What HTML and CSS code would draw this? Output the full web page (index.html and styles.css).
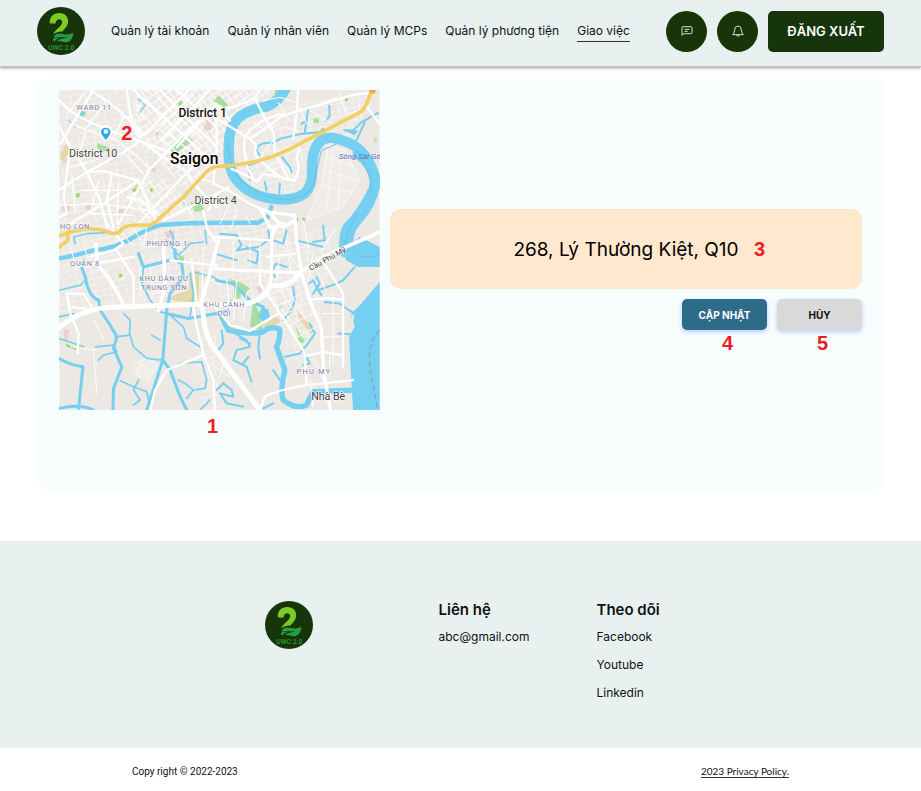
FILE: index.html
```html
<!DOCTYPE html>
<html lang="vi">
<head>
<meta charset="utf-8">
<meta name="viewport" content="width=device-width, initial-scale=1">
<title>UWC 2.0</title>
<link rel="stylesheet" href="styles.css">
</head>
<body>
<svg class="defs" aria-hidden="true">
  <symbol id="logo" viewBox="24 15 142 142">
    <circle cx="95" cy="86" r="71" fill="#17350b"/>
    <path d="M62 64C60 44 73 33 90 33C107 33 117 44 116 59C115 73 105 80 99 88C89 87 82 90 72 96C75 83 95 74 98 62C101 49 80 46 79 64Z" fill="#7ccb25"/>
    <path d="M73 106C76 93 88 91 101 95C111 98 120 96 132 92C130 104 126 117 112 119C101 121 92 113 81 117C91 107 102 110 116 103C101 108 88 100 73 106Z" fill="#2a9a43"/>
    <path d="M71 110C77 105 85 104 93 107C85 108 79 111 75 118C73 116 71 113 71 110Z" fill="#2a9a43"/>
    <text x="96" y="141" text-anchor="middle" class="logo-text">UWC 2.0</text>
  </symbol>
</svg>
<header class="header">
  <a class="logo" href="#" aria-label="UWC 2.0"><svg><use href="#logo"/></svg></a>
  <nav class="nav">
    <a href="#">Quản lý tài khoản</a>
    <a href="#">Quản lý nhân viên</a>
    <a href="#">Quản lý MCPs</a>
    <a href="#">Quản lý phương tiện</a>
    <a href="#" class="active">Giao việc</a>
  </nav>
  <div class="actions">
    <button class="round" type="button" aria-label="Tin nhắn">
      <svg viewBox="0 0 36 36"><path d="M3 31V8Q3 5 6 5H30Q33 5 33 8V22Q33 26 29 26H9ZM11 13H25M11 19H20"/></svg>
    </button>
    <button class="round" type="button" aria-label="Thông báo">
      <svg viewBox="0 0 36 36"><path d="M2 29Q7 25 8 15Q8 3 18 3Q28 3 28 15Q29 25 34 29ZM14 30Q15 34 18 34Q21 34 22 30"/></svg>
    </button>
    <button class="logout" type="button">ĐĂNG XUẤT</button>
  </div>
</header>
<main class="panel">
  <figure class="map">
    <svg viewBox="27 28 963 962" role="img" aria-label="Bản đồ">
      <defs>
        <pattern id="streets" width="34" height="42" patternUnits="userSpaceOnUse" patternTransform="rotate(-35)">
          <path d="M0 2H34M2 0V42M2 22H34M20 22V42" stroke="#fff" stroke-width="3" fill="none"/>
        </pattern>
        <pattern id="blocks" width="46" height="38" patternUnits="userSpaceOnUse" patternTransform="rotate(-12)">
          <path d="M0 2H46M2 0V38M25 0V19M2 20H46" stroke="#f9f8f6" stroke-width="2" fill="none"/>
        </pattern>
      </defs>
      <path fill="#ece8e3" d="M27 28H990V990H27Z"/>
      <path fill="url(#blocks)" d="M27 28H260L300 180V400L27 480Z"/>
      <path fill="url(#streets)" d="M250 28H680L530 120L515 250L420 345L270 180ZM265 300L350 290L420 390L300 425L230 350Z"/>
      <path fill="url(#blocks)" d="M27 480L500 350L700 440L740 700L640 650L500 680L27 700ZM560 90L960 40L900 170L770 230L760 330L650 350L545 300ZM500 440H850L800 860L710 840L660 640L500 760ZM430 770L500 760V980H600L460 990Z"/>
      <path fill="#f0ede8" stroke="#fff" stroke-width="2" d="M835 195L815 315L770 420L880 380L930 300L885 210ZM828 230L915 255M823 270L929 300M815 315L909 338M850 205L830 390M875 215L865 380M247 850L290 835L323 855L295 900L245 880M262 850L310 875M280 838L260 885"/>

      <!-- parks, sand and public grounds -->
      <path fill="#a8dda0" d="M355 210L405 158L430 180L375 220ZM90 88L108 95L100 112L84 105ZM139 187L180 202L175 215L142 205ZM420 365L455 372L465 390L435 395ZM377 66L388 56L400 66L388 77ZM490 60L507 45L535 73L522 80ZM790 115L807 112L808 126L793 128ZM553 620H572V655H553ZM578 610L600 625L585 640ZM685 665L698 680L690 690ZM735 735L755 770L748 775ZM744 770L765 775L760 790L745 785ZM610 660L630 700L640 755L600 740ZM675 28H695L675 62ZM535 595L580 610L600 680L570 630ZM385 528L400 525L402 542L388 543Z"/>
      <path fill="#e2d8aa" d="M45 190L62 210L35 245L29 225ZM258 310L275 320L270 333L248 330ZM420 575L448 570L445 670L360 660L370 645L415 630ZM740 690L785 740L795 750L782 760L750 720ZM533 725L560 740L545 755L530 748ZM630 730L680 710L695 725L650 745ZM970 175L982 168L983 182L975 188Z"/>
      <path fill="#e8cfd2" d="M460 145L472 115L495 120L480 150ZM35 375H60V392H35ZM108 370L130 376L127 390L105 386ZM205 385L235 388L232 398L205 398ZM308 150L328 155L324 167L312 162ZM345 455L373 450V470L350 475ZM40 745L58 752L50 780L42 775ZM618 620L640 617L630 642ZM305 260L320 262L315 275L303 272ZM45 235L60 238L35 252Z"/>
      <path fill="#96d766" d="M248 325L258 324L255 334L246 333ZM300 325L308 322V333L300 334ZM77 340L88 338L87 350L78 351ZM885 55L895 52L894 62L886 63ZM735 415L745 412V423H736ZM758 412L766 413L764 424L757 422ZM206 583L215 580L216 590L207 591ZM45 790L75 802L80 810L50 800Z"/>

      <!-- rivers and canals -->
      <g fill="none" stroke="#75cff0" stroke-linecap="round" stroke-linejoin="round">
        <path stroke-width="31" d="M708 22Q690 60 650 78Q600 85 565 112Q536 140 537 192Q532 250 552 288Q585 338 650 352Q725 367 763 340Q788 320 787 270Q785 205 812 182Q835 164 873 178Q930 194 955 240Q980 285 975 320Q940 395 895 440Q880 460 885 515"/>
        <path stroke-width="32" d="M925 220Q965 245 978 300Q970 365 925 415Q890 450 895 500"/>
        <path stroke-width="13" d="M27 534Q80 525 130 510Q200 505 260 465Q290 447 330 434Q420 427 500 427H625L654 410L664 380"/>
        <path stroke-width="9" d="M90 550L105 590Q115 650 145 660L150 690L180 735L200 770L190 805L215 860L190 925L188 990M375 507Q370 540 395 550L400 590L360 640L350 690L338 840L290 990M350 700L415 715L500 700L535 690M338 840L360 870L390 950L410 990M27 836Q60 855 98 860L85 985M27 985Q90 970 130 990M265 520L280 560L360 540M500 601L550 610L605 665L640 680"/>
        <path stroke-width="16" d="M515 710L535 750Q600 765 640 755Q660 735 690 748Q690 780 680 800L705 870Q690 930 700 960Q740 990 770 975L790 935L910 930"/>
        <path stroke-width="5" d="M27 710L70 700M27 775L100 800M135 800L190 795L200 815L160 825L145 840M195 770L240 765L250 800L290 835L338 840M238 765L240 720L220 700M305 765L330 780M360 705L400 740L410 775L450 800M210 902L250 920L290 935L295 960M265 900L250 930L270 960L250 975M360 870L390 850L455 845L470 900L465 925L430 930L405 910L385 900M430 930L410 955M450 990L480 960M280 560L275 610L300 660L330 695L350 700M27 630L90 615L105 600M420 580L430 640L420 710M430 575L490 590L510 605M70 470L110 460L200 455M70 470L75 490M465 450L470 490M360 450L370 470L365 500L385 525L420 490L460 485"/>
        <path stroke-width="6" d="M620 210Q620 185 670 187L690 175L750 160L810 155L820 145M620 210L630 225M765 155L770 120L775 85M770 120L755 130M838 75L840 105L830 120M985 97L935 125L910 150L885 150M945 125L920 180M597 265L600 300M595 255L645 235M645 305L650 330M690 310L688 338M697 230L720 260L725 275M510 460L560 465L575 495L560 510L625 500L655 480L670 480L700 490M655 450L660 480M700 490L710 450M820 435L825 480L790 485M740 480L820 500M495 520L560 540M590 500L625 515L620 550L595 540M675 590Q660 570 680 550L710 560M730 620L735 660L725 690L700 720M790 640L810 610L800 590M765 620L790 600L805 630L860 610L880 600L915 560M805 630L815 645M825 665L870 670L890 685L915 700M780 730L795 760L775 790L750 820L705 830M515 750L520 790L505 810M555 760L590 780L600 800L560 810L550 840L590 860L605 905M580 850L595 830M630 760L625 800L630 835M600 790L570 775M670 870L690 900M500 930L520 910L545 930L550 950L510 940L530 970L580 980M865 760L905 762M765 820L780 850L760 855M670 970L640 985"/>
        <path stroke-width="4" d="M265 55L285 75L265 100M55 120L75 140M400 365L415 380"/>
      </g>
      <path fill="#75cff0" d="M880 510L890 540L925 560H990V500L930 470ZM990 605L935 670L905 700L915 740L898 770L902 850L910 990H990ZM635 680L655 688L660 710L640 725L625 710ZM875 145L925 150L915 165ZM85 98L94 90L102 97L93 108ZM915 700L912 720L904 708Z"/>
      <path fill="none" stroke="#67c0e8" stroke-width="3" d="M530 190Q545 260 565 290Q620 348 690 357Q790 360 795 290L815 210L860 190M915 205Q965 260 965 340M885 490Q900 430 925 400M925 525Q950 535 990 525"/>
      <path fill="none" stroke="#8ba5b6" stroke-width="4" stroke-dasharray="17 8" d="M990 750Q950 790 962 870L984 990"/>

      <!-- local roads -->
      <g fill="none" stroke="#fff" stroke-linecap="round" stroke-linejoin="round">
        <path stroke-width="7" d="M27 60L65 95L120 125L220 165L265 180L360 215M120 28L170 60L240 120L265 170L290 155L405 40L415 28M27 327L110 275L220 215L265 185M27 140L60 200L110 275L150 360L170 440M60 200L40 350L50 400L27 410M130 28L75 115L30 190M250 28L285 60L375 140L440 200L470 235M230 28L240 100L270 160M330 28L400 100L500 200M270 180L355 240L405 270L445 320M360 215L435 250L265 430M445 120L300 265L205 430M110 275L160 272L235 292L265 300L305 395L320 425M265 300L160 370L60 430M230 350L270 360L320 400M185 280L170 360L190 440M380 28L500 140M480 28L330 180M500 70L380 200M500 340L420 380L340 420M440 320L500 380M460 390L470 440L500 490"/>
        <path stroke-width="4" d="M60 130L200 180L250 220M170 60L110 140L85 230M100 40L50 100M190 170L220 110L240 110M60 260L145 235M145 300L120 400M205 310L200 430M27 375L150 370L300 390M95 330L240 330M340 180L420 250M355 160L445 230M300 70L420 185M320 50L450 170M450 60L350 165M430 40L310 160M220 215L280 280M235 205L300 265M280 60L260 90L285 115M390 340L430 410M440 290L500 310M65 285L75 400M125 400L250 405"/>
        <path stroke-width="7" d="M500 75L540 120M530 85L590 65Q620 50 630 28M490 90Q510 150 490 300M495 110L600 175L620 195M615 55L650 120L672 160L675 215L715 295M745 28L740 100L730 175M600 175Q640 150 690 110Q740 90 800 75L900 45L965 35M585 220Q575 170 600 150Q640 110 700 100M585 220Q590 275 620 305M620 195Q605 230 650 255Q690 300 735 300Q755 255 740 235L750 190M620 305L590 285L545 265M715 295L640 280L620 305M670 225L715 200L750 190M490 310L535 330L600 370L655 395M535 320L500 340L475 390"/>
        <path stroke-width="3" d="M610 125L640 145L680 135M630 230L670 180M650 260L690 240L720 270M640 60L690 50L740 65M750 80L770 130M780 90L850 130M800 80L860 50M870 40L890 100M900 100L960 75M925 60L935 110M685 65L720 120M700 140L745 150M680 260L660 290M690 250L735 290M510 430L540 370M545 440L560 390M590 410L600 430"/>
        <path stroke-width="10" d="M655 395L735 405L740 480L755 580L780 660L815 745L820 850L825 895L842 990M655 395L700 440L735 420M700 430Q665 440 665 480L665 570Q665 640 620 660L590 670M495 565L580 570L750 578M630 385L660 395L690 435L660 440Z"/>
        <path stroke-width="15" d="M27 742Q100 680 200 680L450 672Q500 675 590 670Q640 660 663 615M458 680Q460 770 500 815L630 990M750 578Q720 620 670 617"/>
        <path stroke-width="11" d="M750 578L820 530L990 455M505 480L485 560L450 680M138 490L140 550L180 600L220 672M340 490L345 620L325 690"/>
        <path stroke-width="7" d="M120 530L190 510L220 490L170 430M65 680L130 690L100 640L50 640L60 700L85 760L82 820M70 560L250 530M200 510L250 590V672M360 540L500 555M425 540L440 670M430 685L440 740L460 820L490 900L495 990M300 990L315 930L350 870L460 825M630 580V610L665 660L730 760L765 820L770 915M495 680L540 735L600 752L685 700M665 480L495 470M650 530L735 520M820 545L880 640V860M780 660Q820 650 880 658M765 828L820 815L880 825M630 990L645 950Q680 930 770 915L910 900M945 70L990 130"/>
        <path stroke-width="3" d="M60 500L75 550M100 495L115 540M200 430L240 490M240 430L280 490M290 440L280 500M320 450L310 500M310 640L350 630M250 560L210 600M270 560V650M300 560L310 650M370 500L400 510M460 500L455 660M480 600L510 610M530 600L540 700M560 600L550 720M590 640L580 720M650 650L740 600M680 680L755 640M700 705L770 670M720 735L790 700M745 770L800 740M670 650L720 720M690 630L740 700M710 620L770 720M850 640V850M820 700H880M820 770H880M840 820V890M800 850L820 900M780 900L790 980M790 520L770 630M815 590L830 640M600 480V560M550 480V565M630 490V580M690 520L680 610M710 480L725 580M60 800L140 810M130 720L160 780M130 820L140 940M480 850L540 890M520 850L500 920M860 440L815 510M760 420L780 520M745 560L700 500"/>
        <path stroke="#f2cf63" stroke-width="11" d="M27 466L60 455Q110 440 160 450Q205 470 215 445Q230 430 300 435Q320 425 330 412L400 350Q425 320 460 285Q480 255 520 257Q600 250 645 235Q670 230 750 190L930 95Q950 85 965 28M27 500L52 480L55 450"/>
      </g>
      <path fill="#f79c3b" d="M960 28H978L975 40L960 35Z"/>

      <g class="labels">
        <text class="area" x="79" y="88">WARD 11</text>
        <text class="district" x="56" y="228">District 10</text>
        <text class="major" x="385" y="108">District 1</text>
        <text class="city" x="360" y="250">Saigon</text>
        <text class="district" x="433" y="370">District 4</text>
        <text class="area" x="29" y="446">HO LON</text>
        <text class="area" x="289" y="496">PHƯỜNG 1</text>
        <text class="area" x="60" y="558">QUẬN 8</text>
        <text class="area" x="342" y="601" text-anchor="middle">KHU DÂN CƯ</text>
        <text class="area" x="342" y="628" text-anchor="middle">TRUNG SƠN</text>
        <text class="area" x="523" y="680" text-anchor="middle">KHU CẢNH</text>
        <text class="area" x="523" y="706" text-anchor="middle">ĐỒI</text>
        <text class="water" x="867" y="236">Sông Sài Gò</text>
        <text class="bridge" transform="translate(783 572) rotate(-29)">Cầu Phú Mỹ</text>
        <text class="area wide" x="740" y="881">PHU MY</text>
        <text class="district" x="784" y="959">Nhà Bè</text>
      </g>
      <path fill="#fff" d="M148 152A19 19 0 0 1 186 152Q186 164 167 183Q148 164 148 152Z"/>
      <path fill="#2aa7f0" fill-rule="evenodd" d="M152 153A15 15 0 0 1 181 153Q181 163 167 178Q152 163 152 153ZM160 153A7 7 0 0 0 174 153A7 7 0 0 0 160 153Z"/>
      <text class="pin-number" x="213" y="179">2</text>
    </svg>
    <figcaption class="mark">1</figcaption>
  </figure>
  <section class="task">
    <div class="address">268, Lý Thường Kiệt, Q10<span class="mark address-mark">3</span></div>
    <div class="choices">
      <div class="choice"><button class="btn primary" type="button">CẬP NHẬT</button><span class="mark">4</span></div>
      <div class="choice"><button class="btn" type="button">HỦY</button><span class="mark">5</span></div>
    </div>
  </section>
</main>
<footer>
  <div class="footer-main">
    <a class="logo" href="#" aria-label="UWC 2.0"><svg><use href="#logo"/></svg></a>
    <section class="column">
      <h2>Liên hệ</h2>
      <a href="#">abc@gmail.com</a>
    </section>
    <section class="column">
      <h2>Theo dõi</h2>
      <a href="#">Facebook</a>
      <a href="#">Youtube</a>
      <a href="#">Linkedin</a>
    </section>
  </div>
  <div class="legal">
    <span class="copyright">Copy right © 2022-2023</span>
    <a href="#">2023 Privacy Policy.</a>
  </div>
</footer>
</body>
</html>
```
FILE: styles.css
```css
* { box-sizing: border-box; }
body {
  margin: 0;
  background: #fff;
  color: #111;
  font-family: "Inter", "Liberation Sans", sans-serif;
  font-size: 12px;
}
a { color: inherit; text-decoration: none; }
button { border: 0; padding: 0; font-family: inherit; cursor: pointer; }
.defs { position: absolute; width: 0; height: 0; }

.header {
  display: flex;
  align-items: center;
  height: 67px;
  padding: 0 37px 4px;
  background: #e8f1f0;
  border-bottom: 1px solid #bcc3c2;
  box-shadow: 0 1px 3px rgba(0, 0, 0, .4);
}
.logo { display: block; width: 48px; height: 48px; }
.logo svg { display: block; width: 100%; height: 100%; }
.logo-text { font: 500 20px Roboto, sans-serif; fill: #2a9a43; }
.nav { display: flex; gap: 18px; margin-left: 26px; white-space: nowrap; }
.nav a { line-height: 20px; border-bottom: 1px solid transparent; }
.nav .active { border-color: #333; }
.actions { display: flex; gap: 10px; margin-left: auto; }
.round {
  display: grid;
  place-items: center;
  width: 41px;
  height: 41px;
  border-radius: 50%;
  background: #17350b;
}
.round svg { width: 12px; height: 12px; fill: none; stroke: #d3dccf; stroke-width: 3; stroke-linejoin: round; }
.logout {
  width: 116px;
  height: 41px;
  border-radius: 5px;
  background: #17350b;
  color: #fff;
  font-size: 13px;
  font-weight: 600;
}

.panel {
  display: grid;
  grid-template-columns: 321px 1fr;
  gap: 10px;
  margin: 12px 37px 51px;
  padding: 11px 22px 52px;
  border-radius: 12px;
  background: #f7fdfd;
}
.map { margin: 0; }
.map svg { display: block; width: 100%; height: 320px; }
.map .mark { display: block; padding: 4px 14px 0 0; }
.mark {
  color: #f01c24;
  font: 700 20px/24px "Liberation Sans", sans-serif;
  text-align: center;
}
.labels {
  font-family: Roboto, sans-serif;
  fill: #444;
  stroke: #fff;
  stroke-width: 4px;
  stroke-opacity: .7;
  paint-order: stroke;
}
.area { font-size: 22px; letter-spacing: 2px; fill: #7779a3; }
.wide { letter-spacing: 4px; }
.district { font-size: 32px; }
.major { font-size: 36px; font-weight: 500; fill: #111; }
.city { font-size: 47px; font-weight: 500; fill: #000; }
.water { font-size: 24px; font-style: italic; fill: #5a70bd; stroke: none; }
.bridge { font-size: 23px; }
.pin-number { font: 700 60px "Liberation Sans", sans-serif; fill: #f01c24; }

.task { display: grid; grid-template-rows: 1fr 80px 1fr; gap: 10px; height: 318px; }
.address {
  grid-row: 2;
  position: relative;
  display: grid;
  place-items: center;
  border-radius: 10px;
  background: #ffe8cd;
  color: #000;
  font-size: 19px;
}
.address-mark { position: absolute; left: calc(50% + 128px); }
.choices { grid-row: 3; display: flex; justify-content: flex-end; gap: 10px; }
.choice { display: flex; flex-direction: column; width: 85px; }
.choice .mark { padding: 1px 0 0 6px; }
.btn {
  height: 31px;
  border-radius: 5px;
  background: #d9d9d9;
  color: #111;
  box-shadow: 0 2px 4px rgba(120, 160, 255, .5);
  font-size: 10px;
  font-weight: 700;
}
.primary { background: #2d6c89; color: #fff; }

.footer-main {
  display: grid;
  grid-template-columns: 174px 158px 60px;
  justify-content: center;
  min-height: 207px;
  padding: 60px 20px 40px;
  background: #e8f1f0;
}
.column { display: flex; flex-direction: column; gap: 8px; white-space: nowrap; }
.column h2 { margin: 0; font-size: 15px; line-height: 18px; font-weight: 600; }
.column a { line-height: 20px; }
.legal {
  display: flex;
  justify-content: space-between;
  align-items: center;
  min-height: 43px;
  padding: 4px 132px 0;
  font-size: 10px;
}
.copyright { font-family: Roboto, sans-serif; }
.legal a { border-bottom: 1px solid #333; font-family: Lato, sans-serif; }
```
